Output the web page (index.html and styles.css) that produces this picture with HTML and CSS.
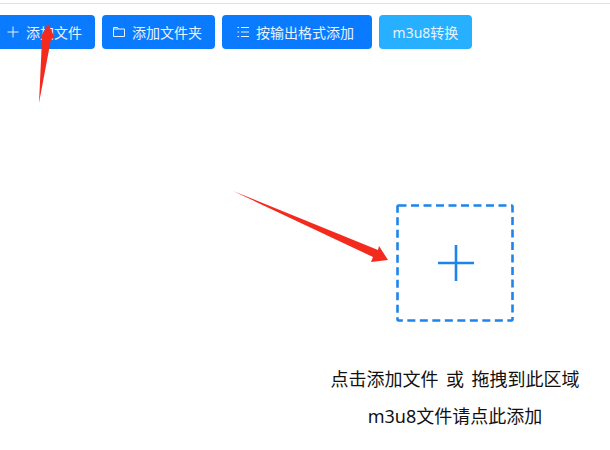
FILE: index.html
```html
<!DOCTYPE html>
<html lang="zh-CN">
<head>
<meta charset="utf-8">
<title>添加文件</title>
<link rel="stylesheet" href="styles.css">
</head>
<body>
<div class="page">
  <div class="toolbar">
    <button class="btn btn-first">
      <svg class="ico" viewBox="0 0 12 12"><path d="M6 .5v11M.5 6h11"/></svg>
      <span>添加文件</span>
    </button>
    <button class="btn">
      <svg class="ico" viewBox="0 0 12 12"><path d="M.5 10.5V1.5h4l1 1.5h6v7.5zM.5 3h5"/></svg>
      <span>添加文件夹</span>
    </button>
    <button class="btn btn-list">
      <svg class="ico" viewBox="0 0 12 12"><path d="M.5 1.5h1.6M.5 6h1.6M.5 10.5h1.6"/><path d="M4 1.5h8M4 6h8M4 10.5h8"/></svg>
      <span>按输出格式添加</span>
    </button>
    <button class="btn btn-light"><span>m3u8转换</span></button>
  </div>
  <div class="main">
    <div class="drop">
      <svg class="drop-border" viewBox="0 0 118 118"><rect x="1.5" y="1.5" width="115" height="115" rx="1"/></svg>
      <svg class="drop-plus" viewBox="0 0 36 36"><path d="M18 0v36M0 18h36"/></svg>
    </div>
    <p class="hint hint-a">点击添加文件<span class="or">或</span>拖拽到此区域</p>
    <p class="hint">m3u8文件请点此添加</p>
  </div>
  <svg class="arrow arrow-up" viewBox="0 0 22 86"><path d="M3 83 6 19 4 18 12 4 19 18 15 19Z"/></svg>
  <svg class="arrow arrow-right" viewBox="0 0 156 72"><path d="M0 0 145 59 146 55 155 69 138 71 140 66Z"/></svg>
</div>
</body>
</html>
```
FILE: styles.css
```css
* { box-sizing: border-box; }
html, body { margin: 0; padding: 0; background: #fff; }
.page {
  position: relative;
  width: 610px;
  height: 450px;
  overflow: hidden;
  font-family: "Noto Sans", "Noto Sans CJK SC", sans-serif;
}
.toolbar {
  display: flex;
  gap: 7px;
  margin-left: -4px;
  padding-top: 12px;
  border-top: 3px solid transparent;
  position: relative;
}
.toolbar::before {
  content: "";
  position: absolute;
  left: 0;
  right: 0;
  top: 0;
  height: 1px;
  background: #e2e2e2;
}
.btn {
  display: flex;
  align-items: center;
  justify-content: center;
  gap: 7px;
  height: 34px;
  padding: 0 13px 0 11px;
  border: 0;
  border-radius: 4px;
  background: #0a7bff;
  color: #e8f3ff;
  font: inherit;
  font-size: 14px;
}
.btn-list { width: 150px; padding: 0 18px 0 15px; }
.btn-light { width: 93px; background: #26b0ff; padding: 0; }
.ico {
  flex: none;
  width: 12px;
  height: 12px;
  fill: none;
  stroke: #e8f3ff;
  stroke-width: 1;
}
.main {
  display: flex;
  flex-direction: column;
  align-items: center;
  padding: 155px 0 0 300px;
}
.drop {
  position: relative;
  display: flex;
  align-items: center;
  justify-content: center;
  width: 118px;
  height: 118px;
  padding-left: 2px;
}
.drop-border {
  position: absolute;
  inset: 0;
  width: 118px;
  height: 118px;
  fill: none;
  stroke: #1e84ea;
  stroke-width: 2.6;
  stroke-dasharray: 8 4.5;
}
.drop-plus {
  width: 36px;
  height: 36px;
  fill: none;
  stroke: #1e84ea;
  stroke-width: 2.6;
}
.hint {
  margin: 0;
  height: 37px;
  line-height: 37px;
  font-size: 18px;
  color: #111;
  white-space: nowrap;
}
.hint-a { margin-top: 39px; }
.or { margin: 0 7.5px; }
.arrow {
  position: absolute;
  fill: #f32a1e;
}
.arrow-up { left: 36px; top: 20px; width: 22px; height: 86px; }
.arrow-right { left: 233px; top: 191px; width: 156px; height: 72px; }
```
